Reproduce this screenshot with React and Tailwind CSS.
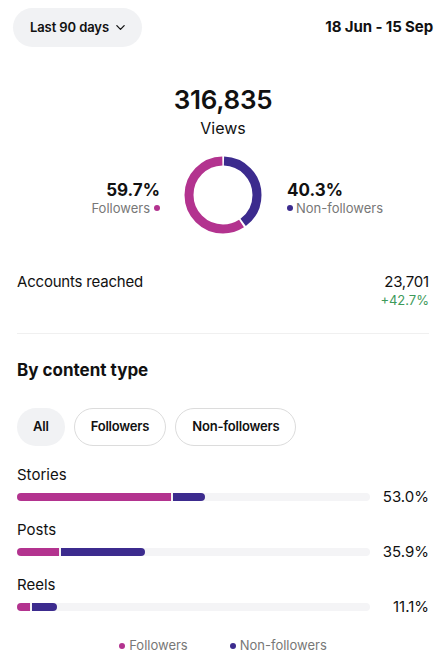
import React from 'react';

const MAGENTA = '#b3338f';
const PURPLE = '#3c2b8e';

const Donut = () => {
  const r = 34;
  const c = 2 * Math.PI * r;
  const gap = 2;
  const purple = c * 0.403;
  const magenta = c - purple;
  return (
    <svg width="78" height="78" viewBox="0 0 78 78">
      <g transform="rotate(-90 39 39)">
        <circle
          cx="39" cy="39" r={r} fill="none" stroke={PURPLE} strokeWidth="9"
          strokeDasharray={`${purple - gap} ${c}`}
          strokeDashoffset={-gap / 2}
        />
        <circle
          cx="39" cy="39" r={r} fill="none" stroke={MAGENTA} strokeWidth="9"
          strokeDasharray={`${magenta - gap} ${c}`}
          strokeDashoffset={-(purple + gap / 2)}
        />
      </g>
    </svg>
  );
};

const rows = [
  { name: 'Stories', f: 154, n: 32, pct: '53.0%' },
  { name: 'Posts', f: 42, n: 84, pct: '35.9%' },
  { name: 'Reels', f: 13, n: 25, pct: '11.1%' },
];

const App = () => {
  return (
    <div className="w-[446px] h-[665px] bg-white text-[#111] overflow-hidden" style={{ fontFamily: 'Inter, "Liberation Sans", sans-serif' }}>
      {/* header */}
      <div className="flex items-center justify-between pl-[13px] pr-[13px] pt-[8px]">
        <button className="h-[39px] pl-[17px] pr-[16px] rounded-full bg-[#f1f2f4] flex items-center gap-[6px] text-[13px] font-semibold tracking-[-0.1px]">
          Last 90 days
          <svg width="11" height="11" viewBox="0 0 12 12" fill="none" stroke="#111" strokeWidth="1.4" strokeLinecap="round" strokeLinejoin="round">
            <path d="M2 4l4 4 4-4" />
          </svg>
        </button>
        <span className="text-[15px] font-bold tracking-[-0.1px]">18 Jun - 15 Sep</span>
      </div>

      {/* views */}
      <div className="flex flex-col items-center mt-[38px]">
        <div className="text-[26px] font-semibold leading-[30px] tracking-[-0.3px]">316,835</div>
        <div className="text-[16px] leading-[20px] mt-[3px]">Views</div>
      </div>

      <div className="flex items-center justify-center mt-[18px]">
        <div className="w-[140px] flex flex-col items-end pr-[24px] mt-[6px]">
          <div className="text-[17px] font-bold leading-[20px]">59.7%</div>
          <div className="flex items-center gap-[4px] text-[13px] text-[#777] leading-[16px]">
            Followers
            <span className="w-[6px] h-[6px] rounded-full" style={{ background: MAGENTA }} />
          </div>
        </div>
        <Donut />
        <div className="w-[140px] flex flex-col items-start pl-[25px] mt-[6px]">
          <div className="text-[17px] font-bold leading-[20px]">40.3%</div>
          <div className="flex items-center gap-[3px] text-[13px] text-[#777] leading-[16px]">
            <span className="w-[6px] h-[6px] rounded-full" style={{ background: PURPLE }} />
            Non-followers
          </div>
        </div>
      </div>

      {/* accounts reached */}
      <div className="flex justify-between px-[17px] mt-[38px]">
        <span className="text-[15px] leading-[20px] tracking-[-0.2px]">Accounts reached</span>
        <div className="flex flex-col items-end">
          <span className="text-[15px] leading-[20px] tracking-[-0.2px]">23,701</span>
          <span className="text-[13px] leading-[16px] text-[#3d9a5a]">+42.7%</span>
        </div>
      </div>

      <div className="mx-[17px] mt-[25px] h-px bg-[#f0f0f0]" />

      <div className="px-[17px] mt-[25px] text-[17px] font-bold leading-[22px]">By content type</div>

      {/* filters */}
      <div className="flex gap-[9px] px-[17px] mt-[27px]">
        <button className="h-[38px] px-[16px] rounded-full bg-[#f1f2f4] text-[13px] font-semibold tracking-[-0.2px]">All</button>
        <button className="h-[38px] px-[16px] rounded-full border border-[#dcdcdc] text-[13px] font-semibold tracking-[-0.2px]">Followers</button>
        <button className="h-[38px] px-[16px] rounded-full border border-[#dcdcdc] text-[13px] font-semibold tracking-[-0.2px]">Non-followers</button>
      </div>

      {/* bars */}
      <div className="flex flex-col gap-[13px] mt-[19px] px-[17px]">
        {rows.map((r) => (
          <div key={r.name}>
            <div className="text-[15px] leading-[20px]">{r.name}</div>
            <div className="flex items-center mt-[2px]">
              <div className="w-[353px] h-[8px] rounded-full bg-[#f4f4f6] flex">
                <div className="h-full rounded-l-full" style={{ width: r.f, background: MAGENTA }} />
                <div className="h-full w-[2px]" />
                <div className="h-full rounded-r-full" style={{ width: r.n, background: PURPLE }} />
              </div>
              <span className="ml-auto text-[15px] leading-[20px]">{r.pct}</span>
            </div>
          </div>
        ))}
      </div>

      {/* legend */}
      <div className="flex justify-center gap-[42px] mt-[19px] text-[13px] text-[#777]">
        <div className="flex items-center gap-[4px]">
          <span className="w-[6px] h-[6px] rounded-full" style={{ background: MAGENTA }} />
          Followers
        </div>
        <div className="flex items-center gap-[4px]">
          <span className="w-[6px] h-[6px] rounded-full" style={{ background: PURPLE }} />
          Non-followers
        </div>
      </div>
    </div>
  );
};

export default App;
